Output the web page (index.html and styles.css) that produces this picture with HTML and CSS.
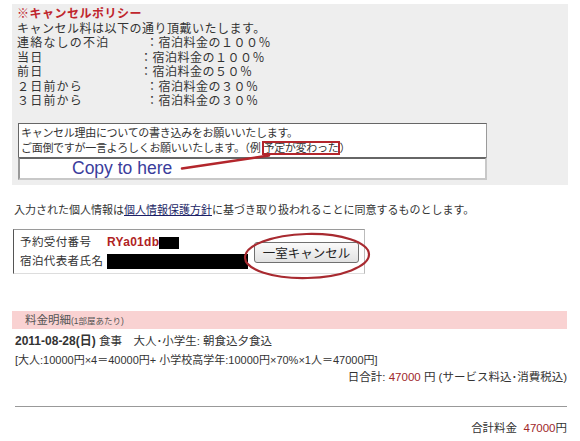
FILE: index.html
```html
<!DOCTYPE html>
<html lang="ja">
<head>
<meta charset="utf-8">
<link rel="stylesheet" href="styles.css">
</head>
<body>
<div class="page">
  <section class="policy">
    <div class="policy-title">※キャンセルポリシー</div>
    <div class="policy-line">キャンセル料は以下の通り頂戴いたします。</div>
    <div class="rates">
      <span class="term">連絡なしの不泊</span><span class="shift">：宿泊料金の１００％</span>
      <span class="term">当日</span><span>：宿泊料金の１００％</span>
      <span class="term">前日</span><span>：宿泊料金の５０％</span>
      <span class="term">２日前から</span><span class="shift">：宿泊料金の３０％</span>
      <span class="term">３日前から</span><span class="shift">：宿泊料金の３０％</span>
    </div>
    <div class="reason">
      <div class="reason-text">キャンセル理由についての書き込みをお願いいたします。<br>ご面倒ですが一言よろしくお願いいたします。（例<span class="mark">予定が変わった</span>）</div>
      <div class="reason-input">Copy to here</div>
    </div>
    <svg class="arrow" width="556" height="181" viewBox="0 0 556 181"><line x1="170" y1="164.5" x2="257" y2="151.5" stroke="#b3262c" stroke-width="2.5" stroke-linecap="round"/></svg>
  </section>

  <p class="consent">入力された個人情報は<a class="policy-link" href="#">個人情報保護方針</a>に基づき取り扱われることに同意するものとします。</p>

  <div class="reserve">
    <div class="reserve-info">
      <span class="label">予約受付番号</span><span class="value"><b class="code">RYa01db</b><i class="mask mask-code"></i></span>
      <span class="label">宿泊代表者氏名</span><span class="value"><i class="mask mask-name"></i></span>
    </div>
    <button class="cancel-btn" type="button">一室キャンセル</button>
    <svg class="ring" width="128" height="48" viewBox="0 0 128 48"><ellipse cx="64" cy="24" rx="62" ry="22" fill="none" stroke="#a82a30" stroke-width="2.2" transform="rotate(-1.5 64 24)"/></svg>
  </div>

  <div class="fee-head">料金明細<small>(1部屋あたり)</small></div>
  <div class="fee-date"><b>2011-08-28(日)</b> 食事　大人･小学生: 朝食込夕食込</div>
  <div class="fee-calc">[大人:10000円×4＝40000円+ 小学校高学年:10000円×70%×1人＝47000円]</div>
  <div class="fee-day">日合計: <span class="price">47000</span> 円 (サービス料込･消費税込)</div>
  <hr class="rule">
  <div class="fee-total">合計料金&nbsp;&nbsp;<span class="price">47000</span>円</div>
</div>
</body>
</html>
```

FILE: styles.css
```css
html, body {
  margin: 0;
  padding: 0;
  background: #ffffff;
}

body {
  font-family: "Liberation Sans", "Noto Sans CJK JP", sans-serif;
  color: #333333;
}

.page {
  width: 580px;
  box-sizing: border-box;
  padding: 4px 13px 0 12px;
}

.policy {
  position: relative;
  background: #eeeeee;
  margin-right: -1px;
  height: 181px;
  box-sizing: border-box;
  padding: 3px 80px 0 5px;
  font-size: 12px;
  letter-spacing: 0.5px;
  line-height: 14.5px;
}

.policy-title {
  color: #c0262d;
  font-weight: bold;
}

.rates {
  display: grid;
  grid-template-columns: 123px auto;
}

.rates .term {
  letter-spacing: 1.2px;
}

.rates .shift {
  padding-left: 6px;
}

.reason {
  margin: 14px 0 0 1px;
  width: 469px;
  letter-spacing: -0.3px;
}

.reason-text {
  background: #ffffff;
  border-top: 1px solid #666666;
  border-left: 1px solid #666666;
  border-right: 1px solid #9a9a9a;
  padding: 2px 2px 0 2px;
  height: 31px;
  font-size: 11px;
  line-height: 15px;
  white-space: nowrap;
}

.mark {
  outline: 2px solid #b3262c;
  outline-offset: -1px;
  padding: 0 1px;
  margin-left: 2px;
}

.reason-input {
  background: #ffffff;
  box-sizing: border-box;
  height: 23px;
  border-style: solid;
  border-width: 2px;
  border-color: #666666 #c8c8c8 #c8c8c8 #999999;
  padding-left: 52px;
  font-family: "Liberation Sans", sans-serif;
  font-size: 17.5px;
  letter-spacing: 0;
  line-height: 18px;
  color: #3a3d9c;
}

.arrow {
  position: absolute;
  left: 0;
  top: 0;
  pointer-events: none;
}

.consent {
  margin: 17px 0 0 2px;
  font-size: 11px;
  line-height: 16px;
  white-space: nowrap;
}

.policy-link {
  color: #1c1f66;
  text-decoration: underline;
}

.reserve {
  position: relative;
  margin: 11px 0 0 1px;
  width: 352px;
  height: 45px;
  box-sizing: border-box;
  border-style: solid;
  border-width: 1px;
  border-color: #9a9a9a #bbbbbb #dddddd #555555;
  padding: 3px 0 0 6px;
  display: flex;
  align-items: flex-start;
}

.reserve-info {
  display: grid;
  grid-template-columns: 87px auto;
  font-size: 11.5px;
  line-height: 19px;
  width: 229px;
}

.reserve-info .label {
  letter-spacing: 0.4px;
}

.reserve-info .value {
  display: flex;
  align-items: center;
}

.code {
  color: #b01f24;
  font-size: 12px;
  font-weight: bold;
  letter-spacing: 0.3px;
}

.mask {
  display: inline-block;
  background: #000000;
}

.mask-code {
  width: 20px;
  height: 12px;
}

.mask-name {
  width: 141px;
  height: 15px;
}

.cancel-btn {
  margin: 9px 0 0 5px;
  width: 105px;
  height: 21px;
  padding: 0;
  border: 1px solid #707070;
  border-radius: 3px;
  background: linear-gradient(#fafafa, #e2e2e2);
  font-family: "Noto Sans CJK JP", sans-serif;
  font-size: 12.5px;
  color: #222222;
  letter-spacing: 0;
}

.ring {
  position: absolute;
  left: 229px;
  top: 2px;
  pointer-events: none;
}

.fee-head {
  margin-top: 37px;
  height: 18px;
  background: #f9d2d2;
  padding-left: 13px;
  font-size: 11.5px;
  line-height: 18px;
  color: #555555;
}

.fee-head small {
  font-size: 8.5px;
}

.fee-date {
  margin-top: 2px;
  padding-left: 3px;
  font-size: 11.5px;
  line-height: 20px;
}

.fee-date b {
  font-size: 12px;
}

.fee-calc {
  padding-left: 3px;
  font-size: 11px;
  line-height: 18px;
}

.fee-day {
  text-align: right;
  font-size: 11.5px;
  line-height: 17px;
}

.price {
  color: #a0272a;
}

.rule {
  margin: 20px 0 0 3px;
  border: 0;
  border-top: 1px solid #999999;
  height: 0;
}

.fee-total {
  margin-top: 12px;
  text-align: right;
  font-size: 11.5px;
  line-height: 18px;
}
```
